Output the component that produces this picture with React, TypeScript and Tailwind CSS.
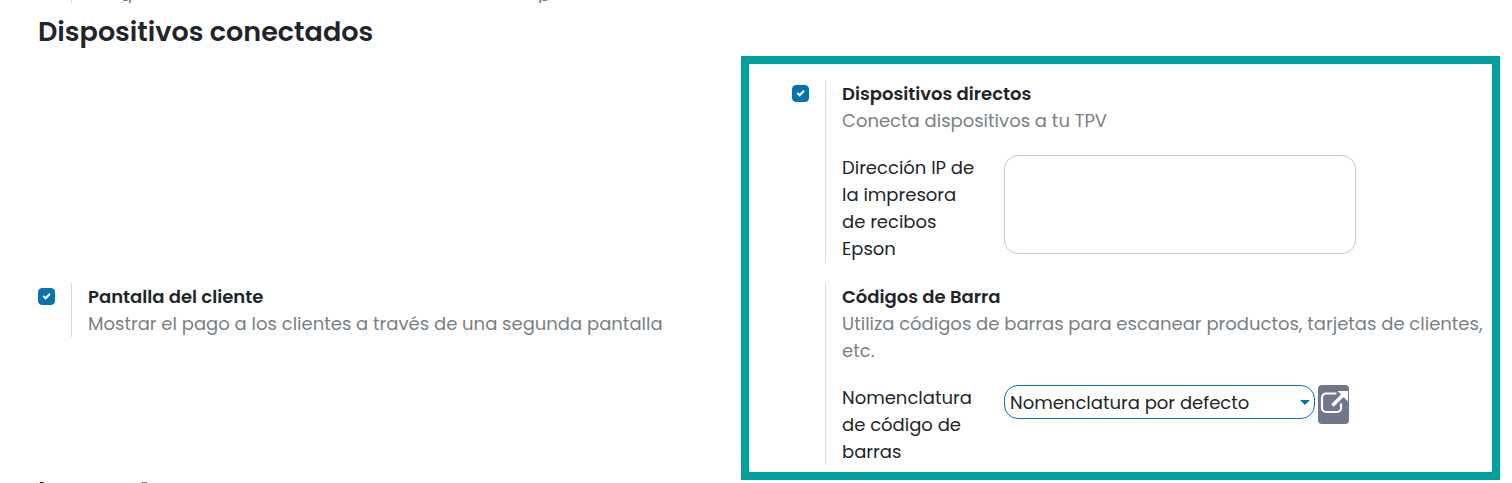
import type { ReactNode } from 'react';

type SettingProps = {
  id: string;
  title: string;
  description: string;
  toggle?: boolean;
  children?: ReactNode;
};

function Setting({ id, title, description, toggle, children }: SettingProps) {
  return (
    <div className="flex">
      <div className="w-[33px] shrink-0 pt-[5px]">
        {toggle && (
          <span className="grid size-[17px]">
            <input
              id={id}
              type="checkbox"
              defaultChecked
              className="peer col-start-1 row-start-1 size-[17px] appearance-none rounded-[4px] border border-[#0874ad] bg-white checked:bg-[#0874ad]"
            />
            <svg
              viewBox="0 0 17 17"
              className="pointer-events-none col-start-1 row-start-1 hidden size-[17px] peer-checked:block"
              fill="none"
              stroke="white"
              strokeWidth="2"
              aria-hidden="true"
            >
              <path d="M5.3 8 7.6 10.300 12 5.800" />
            </svg>
          </span>
        )}
      </div>
      <div className="min-w-0 flex-1 border-l border-[#d9dbde] pl-4">
        {toggle ? (
          <label htmlFor={id} className="block font-semibold">{title}</label>
        ) : (
          <h3 className="font-semibold">{title}</h3>
        )}
        <p className="text-[#7a7f84]">{description}</p>
        {children}
      </div>
    </div>
  );
}

export default function App() {
  return (
    <main className="overflow-hidden bg-white font-['Poppins','Inter',sans-serif] text-[18px] leading-[27px] text-[#212529]">
      <div className="ml-[71px] flex h-[3px] items-end overflow-hidden border-l border-[#d9dbde] pl-12 text-[#7a7f84]">
        <span className="w-[418px] shrink-0 leading-[16px]">g</span>
        <span className="leading-[16px]">p</span>
      </div>
      <h2 className="pt-3 pb-[7px] pl-[38px] text-[27px] leading-[34px] font-semibold">Dispositivos conectados</h2>

      <div className="grid grid-cols-[703fr_759fr] pr-3 pl-[38px]">
        <div className="pointer-events-none col-start-2 row-span-2 row-start-1 border-8 border-[#00a09d]" />

        <div className="col-start-2 row-start-1 pt-6 pr-2 pb-[21px] pl-[51px]">
          <Setting id="direct" title="Dispositivos directos" description="Conecta dispositivos a tu TPV" toggle>
            <div className="mt-5 flex items-start">
              <label htmlFor="ip" className="w-[162px] shrink-0 pr-6">Dirección IP de la impresora de recibos Epson</label>
              <textarea id="ip" className="mt-px h-[99px] w-[352px] min-w-0 resize-none rounded-[14px] border border-[#c8c8c8] px-[5px]" />
            </div>
          </Setting>
        </div>

        <div className="col-start-1 row-start-2">
          <Setting id="customer" title="Pantalla del cliente" description="Mostrar el pago a los clientes a través de una segunda pantalla" toggle />
        </div>

        <div className="col-start-2 row-start-2 pr-2 pb-[15px] pl-[51px]">
          <Setting id="barcodes" title="Códigos de Barra" description="Utiliza códigos de barras para escanear productos, tarjetas de clientes, etc.">
            <div className="mt-5 flex items-start">
              <label htmlFor="nomenclature" className="w-[162px] shrink-0 pr-6">Nomenclatura de código de barras</label>
              <div className="mt-px grid w-[311px] min-w-0 items-center">
                <select
                  id="nomenclature"
                  className="col-start-1 row-start-1 h-[34px] w-full appearance-none rounded-[14px] border border-[#0874ad] bg-white px-[5px]"
                >
                  <option>Nomenclatura por defecto</option>
                </select>
                <svg viewBox="0 0 10 5" className="pointer-events-none col-start-1 row-start-1 mr-[5px] h-[5px] w-[10px] justify-self-end" fill="#0874ad" aria-hidden="true">
                  <path d="M0 0h10L5 5z" />
                </svg>
              </div>
              <button type="button" aria-label="Abrir" className="mt-px ml-[3px] flex h-[39px] w-[31px] shrink-0 justify-center rounded-[4px] bg-[#71768b] pt-[4px]">
                <svg viewBox="0 0 31 26" className="h-[26px] w-[31px]" aria-hidden="true">
                  <path d="M18.500 4.500H8A4 4 0 0 0 4 8.500v10.500a4 4 0 0 0 4 4h11a4 4 0 0 0 4-4V14.500" fill="none" stroke="white" strokeWidth="2.200" />
                  <path d="M14.500 16.500 26 5" stroke="white" strokeWidth="3.800" />
                  <path d="M19.500 2H30v10.500z" fill="white" />
                </svg>
              </button>
            </div>
          </Setting>
        </div>
      </div>

      <div className="mt-[2px] flex h-px overflow-hidden pl-[38px] text-[26px] leading-[20px] font-semibold">
        <span className="w-[101px] shrink-0">I</span>
        <span className="text-[#7a7f84]">f</span>
      </div>
    </main>
  );
}
